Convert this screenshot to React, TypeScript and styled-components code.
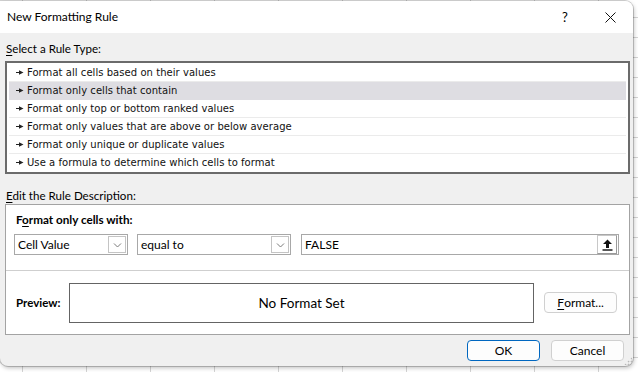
import React from "react";
import styled, { createGlobalStyle } from "styled-components";

const Global = createGlobalStyle`
  html, body { margin: 0; padding: 0; }
  body {
    width: 638px;
    height: 372px;
    overflow: hidden;
    background-color: #ffffff;
    background-image:
      repeating-linear-gradient(to right, transparent 0 22px, #d4d4d4 22px 23px, transparent 23px 64px),
      repeating-linear-gradient(to bottom, transparent 0 19px, #d4d4d4 19px 20px);
    background-position: 0 0, 0 -2px;
    font-family: "Segoe UI", Lato, "Open Sans", sans-serif;
    color: #000;
  }
`;

const Dialog = styled.div`
  width: 633px;
  height: 365px;
  margin-top: 1px;
  background: #f0f0f0;
  border-radius: 0 8px 8px 8px;
  box-shadow: 0 0 0 1px rgba(0,0,0,0.18), 1px 2px 4px rgba(0,0,0,0.25);
  display: flex;
  flex-direction: column;
  overflow: hidden;
  position: relative;
`;

const TitleBar = styled.div`
  height: 32px;
  background: #ffffff;
  display: flex;
  align-items: center;
  padding-left: 7px;
  font-size: 12px;
  flex-shrink: 0;
`;

const Title = styled.div`
  flex: 1;
  padding-bottom: 1px;
`;

const TitleBtn = styled.div<{ $w: number }>`
  width: ${(p) => p.$w}px;
  height: 32px;
  display: flex;
  align-items: center;
  justify-content: center;
  font-size: 13px;
`;

const Body = styled.div`
  flex: 1;
  display: flex;
  flex-direction: column;
  padding: 0 3px 0 5px;
`;

const GroupLabel = styled.div<{ $mt: number }>`
  font-size: 11.6px;
  line-height: 16px;
  margin-top: ${(p) => p.$mt}px;
  padding-left: 1px;
`;

const U = styled.span`
  text-decoration: underline;
  text-underline-offset: 2px;
`;

const ListBox = styled.div`
  margin-top: 4px;
  height: 113px;
  box-sizing: border-box;
  border: 2px solid #6b6b6b;
  background: #fff;
  padding: 1px 2px 0 2px;
  display: flex;
  flex-direction: column;
`;

const Row = styled.div<{ $selected?: boolean; $last?: boolean }>`
  height: 18px;
  box-sizing: border-box;
  display: flex;
  align-items: center;
  gap: 3px;
  padding-left: 7px;
  font-family: "DejaVu Sans", "Noto Sans", sans-serif;
  font-size: 10px;
  letter-spacing: 0.05px;
  color: #111;
  background: ${(p) => (p.$selected ? "#dedde2" : "transparent")};
  border-bottom: 1px solid ${(p) => (p.$last || p.$selected ? "transparent" : "#ebebeb")};
`;

const Arrow = () => (
  <svg width="8" height="7" viewBox="0 0 8 7">
    <line x1="0" y1="3.5" x2="4" y2="3.5" stroke="#222" strokeWidth="1" />
    <polygon points="3,1.2 7.5,3.5 3,5.8" fill="#222" />
  </svg>
);

const Panel = styled.div`
  height: 131px;
  box-sizing: border-box;
  border: 1px solid #a3a3a3;
  background: #fff;
  display: flex;
  flex-direction: column;
`;

const Section = styled.div`
  height: 66px;
  box-sizing: border-box;
  border-bottom: 1px solid #cfcfcf;
  padding: 6px 10px 0 8px;
  display: flex;
  flex-direction: column;
`;

const Bold = styled.div`
  font-size: 11.7px;
  font-weight: 700;
  line-height: 16px;
  padding-left: 2px;
`;

const Controls = styled.div`
  margin-top: 7px;
  display: flex;
  align-items: center;
`;

const Combo = styled.div<{ $w: number; $mr: number }>`
  width: ${(p) => p.$w}px;
  margin-right: ${(p) => p.$mr}px;
  height: 21px;
  box-sizing: border-box;
  border: 1px solid #a8a8a8;
  display: flex;
  align-items: center;
  font-size: 12px;
  padding-left: 3px;
  padding-right: 1px;
`;

const ComboText = styled.div`
  flex: 1;
`;

const DropBtn = styled.div`
  width: 18px;
  height: 17px;
  box-sizing: border-box;
  border: 1px solid #c4c4c4;
  display: flex;
  align-items: center;
  justify-content: center;
`;

const Chevron = () => (
  <svg width="9" height="6" viewBox="0 0 9 6">
    <polyline points="1,1.5 4.5,5 8,1.5" fill="none" stroke="#7a7a7a" strokeWidth="1" />
  </svg>
);

const RefBtn = styled.div`
  width: 20px;
  height: 19px;
  box-sizing: border-box;
  border: 1px solid #c8c8c8;
  border-right-color: #9a9a9a;
  border-bottom-color: #9a9a9a;
  display: flex;
  align-items: center;
  justify-content: center;
`;

const UpIcon = () => (
  <svg width="11" height="12" viewBox="0 0 11 12">
    <polygon points="5.5,0.5 10,5 7,5 7,9 4,9 4,5 1,5" fill="#111" />
    <rect x="0.5" y="10.3" width="10" height="1.4" fill="#111" />
  </svg>
);

const PreviewRow = styled.div`
  flex: 1;
  display: flex;
  align-items: center;
  padding: 0 12px 0 10px;
`;

const PreviewLabel = styled.div`
  width: 53px;
  font-size: 11.5px;
  font-weight: 700;
`;

const PreviewBox = styled.div`
  width: 467px;
  height: 40px;
  box-sizing: border-box;
  border: 1px solid #646464;
  display: flex;
  align-items: center;
  justify-content: center;
  font-size: 13.5px;
  margin-right: 10px;
  margin-top: 1px;
`;

const Button = styled.div<{ $primary?: boolean }>`
  width: 73px;
  height: 21px;
  box-sizing: border-box;
  border: 1px solid ${(p) => (p.$primary ? "#0067c0" : "#d0d0d0")};
  border-radius: 4px;
  background: #fdfdfd;
  display: flex;
  align-items: center;
  justify-content: center;
  font-size: 12px;
  padding-bottom: 1px;
`;

const Footer = styled.div`
  display: flex;
  justify-content: flex-end;
  gap: 11px;
  padding-top: 5px;
  padding-right: 6px;
`;

const Grip = styled.div`
  position: absolute;
  right: 1px;
  bottom: 1px;
  width: 8px;
  height: 8px;
  background-image: radial-gradient(circle, #b8b8b8 0.8px, transparent 1.1px);
  background-size: 3px 3px;
  clip-path: polygon(100% 0, 100% 100%, 0 100%);
`;

const items = [
  "Format all cells based on their values",
  "Format only cells that contain",
  "Format only top or bottom ranked values",
  "Format only values that are above or below average",
  "Format only unique or duplicate values",
  "Use a formula to determine which cells to format",
];

export default function App() {
  return (
    <>
      <Global />
      <Dialog>
        <TitleBar>
          <Title>New Formatting Rule</Title>
          <TitleBtn $w={44}>?</TitleBtn>
          <TitleBtn $w={46}>
            <svg width="11" height="11" viewBox="0 0 11 11">
              <path d="M0.5 0.5 L10.5 10.5 M10.5 0.5 L0.5 10.5" stroke="#111" strokeWidth="1" />
            </svg>
          </TitleBtn>
        </TitleBar>
        <Body>
          <GroupLabel $mt={8}>
            <U>S</U>elect a Rule Type:
          </GroupLabel>
          <ListBox>
            {items.map((t, i) => (
              <Row key={t} $selected={i === 1} $last={i === items.length - 1}>
                <Arrow />
                {t}
              </Row>
            ))}
          </ListBox>
          <GroupLabel $mt={14}>
            <U>E</U>dit the Rule Description:
          </GroupLabel>
          <Panel>
            <Section>
              <Bold>
                F<U>o</U>rmat only cells with:
              </Bold>
              <Controls>
                <Combo $w={114} $mr={9}>
                  <ComboText>Cell Value</ComboText>
                  <DropBtn>
                    <Chevron />
                  </DropBtn>
                </Combo>
                <Combo $w={154} $mr={10}>
                  <ComboText>equal to</ComboText>
                  <DropBtn>
                    <Chevron />
                  </DropBtn>
                </Combo>
                <Combo $w={318} $mr={0}>
                  <ComboText>FALSE</ComboText>
                  <RefBtn>
                    <UpIcon />
                  </RefBtn>
                </Combo>
              </Controls>
            </Section>
            <PreviewRow>
              <PreviewLabel>Preview:</PreviewLabel>
              <PreviewBox>No Format Set</PreviewBox>
              <Button>
                <U>F</U>ormat...
              </Button>
            </PreviewRow>
          </Panel>
          <Footer>
            <Button $primary>OK</Button>
            <Button>Cancel</Button>
          </Footer>
        </Body>
        <Grip />
      </Dialog>
    </>
  );
}
